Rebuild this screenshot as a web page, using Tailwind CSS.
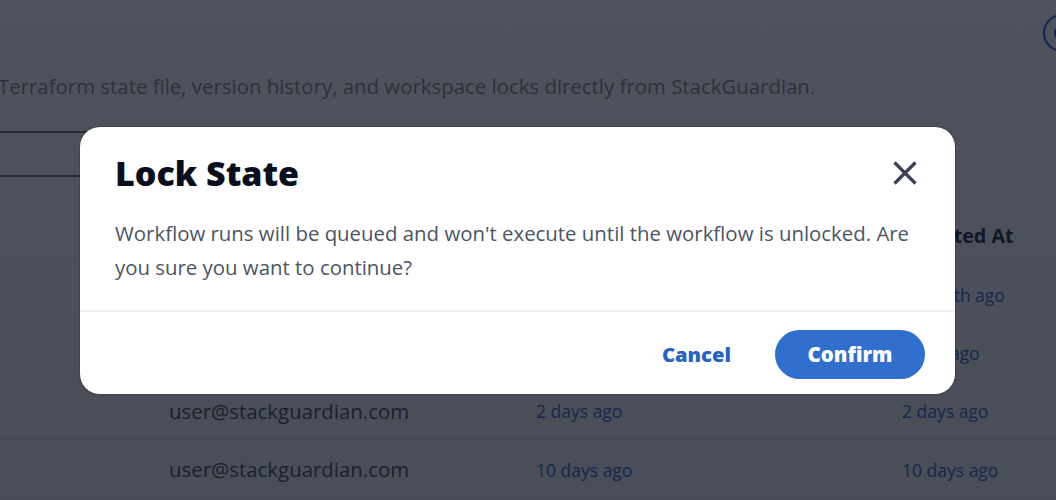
<!DOCTYPE html>
<html lang="en">
<head>
    <meta charset="UTF-8">
    <title>Lock State</title>
    <script src="https://cdn.jsdelivr.net/npm/@tailwindcss/browser@4"></script>
</head>
<body class="bg-white font-['Open_Sans',sans-serif]">
    <div class="relative h-[500px] w-[1056px] overflow-hidden">

        <!-- Page behind the dialog -->
        <div class="flex h-full flex-col">
            <div class="flex h-[71px] shrink-0 justify-end pt-[14px]">
                <div class="-mr-[25px] flex h-[38px] w-[38px] shrink-0 items-center rounded-full border-[2.5px] border-[#1a5fe0] pl-[9px]">
                    <div class="h-[14px] w-[14px] rounded-full border-[2.5px] border-[#1a5fe0]"></div>
                </div>
            </div>
            <p class="-ml-[2px] whitespace-nowrap text-[20.4px] leading-[30px] text-[#8b8889]">Terraform state file, version history, and workspace locks directly from StackGuardian.</p>
            <div class="mt-[30px] h-[46px] w-[300px] shrink-0 border-y-2 border-[#6b7280]"></div>

            <div class="mt-[40px] grid h-[47px] shrink-0 grid-cols-[169px_367px_366px_1fr] items-center border-b border-[#eaecef] pb-[9px] text-[19.7px] font-bold text-[#1f2937]">
                <span></span><span></span><span></span><span class="whitespace-nowrap">Updated At</span>
            </div>
            <div class="grid h-[58.5px] shrink-0 grid-cols-[169px_367px_366px_1fr] items-center border-b border-[#eaecef] pt-[5px]">
                <span></span><span></span><span></span><span class="whitespace-nowrap text-[17.4px] text-[#2f6cd0]">1 month ago</span>
            </div>
            <div class="grid h-[58.5px] shrink-0 grid-cols-[169px_367px_366px_1fr] items-center border-b border-[#eaecef] pt-[3px]">
                <span></span><span></span><span></span><span class="whitespace-nowrap text-[17.4px] text-[#2f6cd0]">1 day ago</span>
            </div>
            <div class="grid h-[58.5px] shrink-0 grid-cols-[169px_367px_366px_1fr] items-center border-b border-[#eaecef] pt-[3px]">
                <span></span><span class="text-[20.4px] text-[#4a4e58]">user@stackguardian.com</span><span class="text-[17.5px] text-[#2f6cd0]">2 days ago</span><span class="whitespace-nowrap text-[17.5px] text-[#2f6cd0]">2 days ago</span>
            </div>
            <div class="grid h-[58.5px] shrink-0 grid-cols-[169px_367px_366px_1fr] items-center border-b border-[#eaecef] pt-[3px]">
                <span></span><span class="text-[20.4px] text-[#4a4e58]">user@stackguardian.com</span><span class="text-[17.5px] text-[#2f6cd0]">10 days ago</span><span class="whitespace-nowrap text-[17.5px] text-[#2f6cd0]">10 days ago</span>
            </div>
        </div>

        <!-- Overlay -->
        <div class="absolute inset-0 bg-linear-to-b from-[#0a0f1e]/72 to-[#0a0f1e]/74"></div>

        <!-- Lock State dialog -->
        <div class="absolute left-[80px] top-[127px] flex h-[267px] w-[875px] flex-col rounded-[20px] bg-white shadow-[0_0_2px_rgba(0,0,0,0.5)]">
            <div class="flex items-center justify-between pl-[35px] pr-[36px] pt-[24px]">
                <h2 class="text-[34px] font-extrabold leading-[45px] text-[#0a0f1e]">Lock State</h2>
                <svg class="-mt-[1px] h-[28px] w-[28px]" viewBox="0 0 28 28" fill="none" stroke="#374151" stroke-width="3.2" aria-label="Close"><path d="M3.5 3.5 24.5 24.5M24.5 3.5 3.5 24.5"/></svg>
            </div>
            <p class="mt-[20px] h-[94px] pl-[35px] pr-[36px] text-[20.4px] leading-[34px] text-[#4b5563]">Workflow runs will be queued and won't execute until the workflow is unlocked. Are you sure you want to continue?</p>
            <div class="flex flex-1 items-center justify-end gap-[44px] border-t-2 border-[#eef1f2] pr-[30px] pt-[3px]">
                <button class="text-[20.2px] font-extrabold text-[#2563c4]">Cancel</button>
                <button class="h-[49px] w-[150px] rounded-full bg-[#316fce] text-[20.4px] font-extrabold text-white">Confirm</button>
            </div>
        </div>
    </div>
</body>
</html>
